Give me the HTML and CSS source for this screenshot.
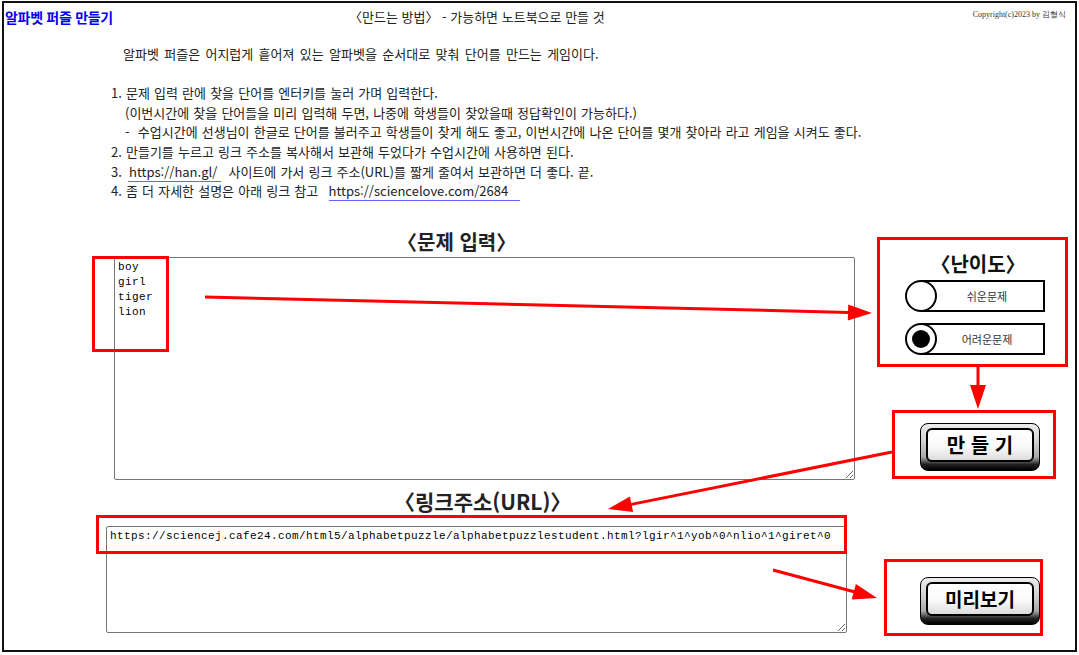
FILE: index.html
```html
<!DOCTYPE html>
<html lang="ko">
<head>
<meta charset="utf-8">
<title>알파벳 퍼즐 만들기</title>
<link rel="stylesheet" href="styles.css">
</head>
<body>
<div class="frame">
  <header class="top">
    <h1 class="title">알파벳 퍼즐 만들기</h1>
    <p class="howto">〈만드는 방법〉 - 가능하면 노트북으로 만들 것</p>
    <p class="copy">Copyright(c)2023 by 김형식</p>
  </header>

  <section class="guide">
    <p class="intro">알파벳 퍼즐은 어지럽게 흩어져 있는 알파벳을 순서대로 맞춰 단어를 만드는 게임이다.</p>
    <p class="gap">&nbsp;</p>
    <p>1. 문제 입력 란에 찾을 단어를 엔터키를 눌러 가며 입력한다.</p>
    <p class="sub">(이번시간에 찾을 단어들을 미리 입력해 두면, 나중에 학생들이 찾았을때 정답확인이 가능하다.)</p>
    <p class="sub">-&nbsp; 수업시간에 선생님이 한글로 단어를 불러주고 학생들이 찾게 해도 좋고, 이번시간에 나온 단어를 몇개 찾아라 라고 게임을 시켜도 좋다.</p>
    <p>2. 만들기를 누르고 링크 주소를 복사해서 보관해 두었다가 수업시간에 사용하면 된다.</p>
    <p>3. <a class="link link-a" href="https://han.gl/">https://han.gl/</a> 사이트에 가서 링크 주소(URL)를 짧게 줄여서 보관하면 더 좋다. 끝.</p>
    <p>4. 좀 더 자세한 설명은 아래 링크 참고 &nbsp;<a class="link link-b" href="https://sciencelove.com/2684">https://sciencelove.com/2684</a></p>
  </section>

  <main class="work">
    <div class="left">
      <h2 class="head">〈문제 입력〉</h2>
      <textarea class="box words" spellcheck="false">boy
girl
tiger
lion</textarea>
      <h2 class="head head-url">〈링크주소(URL)〉</h2>
      <textarea class="box url" spellcheck="false">https://sciencej.cafe24.com/html5/alphabetpuzzle/alphabetpuzzlestudent.html?lgir^1^yob^0^nlio^1^giret^0</textarea>
    </div>

    <div class="right">
      <h2 class="level">〈난이도〉</h2>
      <div class="opt"><span class="dot"></span><span class="bar">쉬운문제</span></div>
      <div class="opt opt-on"><span class="dot"></span><span class="bar">어려운문제</span></div>
      <button class="btn btn-make" type="button"><span class="btn-face">만 들 기</span></button>
      <button class="btn btn-preview" type="button"><span class="btn-face">미리보기</span></button>
    </div>
  </main>
</div>

<svg class="marks" width="1079" height="655" viewBox="0 0 1079 655" aria-hidden="true">
  <g fill="none" stroke="#ff0000" stroke-width="3">
    <rect x="93.5" y="257.5" width="74" height="93"/>
    <rect x="878.5" y="238.5" width="188" height="127"/>
    <rect x="893.5" y="411.5" width="161" height="66"/>
    <rect x="97.5" y="516.5" width="748" height="36"/>
    <rect x="885.5" y="560.5" width="156" height="74"/>
    <line x1="205" y1="297" x2="849" y2="312.4"/>
    <line x1="978" y1="366" x2="978" y2="386"/>
    <line x1="892" y1="452" x2="630" y2="504.6"/>
    <line x1="773" y1="570" x2="855" y2="592"/>
  </g>
  <g fill="#ff0000">
    <polygon points="872,313 847.8,320.4 848.2,304.4"/>
    <polygon points="978,409 970,385 986,385"/>
    <polygon points="608,509 629.9,496.4 633.1,512.1"/>
    <polygon points="877,598 851.7,599.5 855.9,584.1"/>
  </g>
</svg>
</body>
</html>
```

FILE: styles.css
```css
* { box-sizing: border-box; }

html, body {
  margin: 0;
  padding: 0;
  background: #fff;
}

body {
  width: 1079px;
  height: 655px;
  overflow: hidden;
  position: relative;
  font-family: "Noto Sans CJK KR", "Noto Sans", sans-serif;
  color: #222;
}

.frame {
  margin: 1px 2px 0 2px;
  width: 1075px;
  height: 651px;
  border: 2px solid #111;
}

/* header */
.top {
  display: flex;
  align-items: flex-start;
  height: 41px;
  padding: 5px 9px 0 1px;
}

.title {
  margin: 0;
  width: 344px;
  font-size: 14px;
  line-height: 18px;
  font-weight: 700;
  letter-spacing: -0.3px;
  color: #0000f0;
}

.howto {
  margin: 0;
  font-size: 13px;
  line-height: 18px;
  color: #222;
}

.copy {
  margin: 0 0 0 auto;
  font-family: "Liberation Serif", serif;
  font-size: 8px;
  line-height: 10px;
  padding-top: 2px;
  color: #333;
}

/* guide */
.guide {
  font-size: 13px;
  line-height: 19.6px;
  padding-left: 107px;
  word-spacing: 0.5px;
}

.guide p { margin: 0; white-space: nowrap; }

.guide .intro { padding-left: 12px; word-spacing: 1.7px; }
.guide .sub { padding-left: 14px; }

.link {
  color: inherit;
  text-decoration: none;
  border-bottom: 1px solid #6464ff;
  word-spacing: 0;
}

.link-a { padding: 0 4px 0 1px; margin: 0 3px 0 2px; }
.link-b { padding: 0 12px 0 0; margin-left: 2px; }

/* work area */
.work {
  display: flex;
  align-items: flex-start;
  margin-top: 28px;
}

.left {
  display: flex;
  flex-direction: column;
  align-items: flex-start;
  margin-left: 110px;
  width: 741px;
}

.head {
  margin: 0;
  padding-left: 283px;
  font-size: 20px;
  line-height: 26px;
  font-weight: 700;
  color: #222;
  white-space: nowrap;
}

.head-url {
  margin-top: 8px;
  padding-left: 280px;
  font-size: 21px;
}

.box {
  display: block;
  width: 741px;
  margin: 2px 0 0 0;
  padding: 2px 3px;
  border: 1px solid #767676;
  border-radius: 2px;
  font-family: "Liberation Mono", "DejaVu Sans Mono", monospace;
  font-size: 11px;
  letter-spacing: 0.4px;
  line-height: 15px;
  color: #000;
  background: #fff;
  outline: none;
}

.words { height: 223px; }

.url {
  height: 107px;
  margin: 12px 0 0 -8px;
  padding-top: 2px;
}

/* right column */
.right {
  display: flex;
  flex-direction: column;
  align-items: center;
  width: 180px;
  margin-left: 33px;
}

.level {
  margin: 21px 0 0 0;
  font-size: 20px;
  line-height: 28px;
  font-weight: 700;
  color: #111;
}

.opt {
  display: flex;
  align-items: center;
  width: 140px;
  height: 32px;
  margin-top: 2px;
  margin-right: 6px;
}

.opt + .opt { margin-top: 11px; }

.dot {
  position: relative;
  z-index: 1;
  flex: none;
  width: 32px;
  height: 32px;
  border: 2px solid #000;
  border-radius: 50%;
  background: #fff;
  display: flex;
  align-items: center;
  justify-content: center;
}

.opt-on .dot::after {
  content: "";
  width: 18px;
  height: 18px;
  border-radius: 50%;
  background: #000;
}

.bar {
  flex: 1;
  height: 32px;
  margin-left: -16px;
  padding-left: 10px;
  border: 2px solid #000;
  border-left: 0;
  display: flex;
  align-items: center;
  justify-content: center;
  font-size: 11px;
  color: #333;
  background: #fff;
}

.btn {
  display: block;
  width: 120px;
  height: 48px;
  padding: 4px 5px 8px 5px;
  border: 1px solid #000;
  border-radius: 8px;
  background: linear-gradient(#ececec, #cfcfcf 40%, #a8a8a8 72%, #222 88%, #000);
  cursor: pointer;
  font-family: inherit;
}

.btn-make { margin-top: 68px; margin-left: 4px; }
.btn-preview { margin-top: 106px; margin-left: 4px; }

.btn-face {
  display: flex;
  align-items: center;
  justify-content: center;
  height: 100%;
  border: 2px solid #000;
  border-radius: 6px;
  background: linear-gradient(#fff, #fafafa 55%, #dcdcdc);
  font-size: 20px;
  font-weight: 700;
  color: #000;
  line-height: 1;
}

.btn-preview .btn-face { font-size: 19px; }

/* annotations */
.marks {
  position: absolute;
  left: 0;
  top: 0;
  pointer-events: none;
}
```
